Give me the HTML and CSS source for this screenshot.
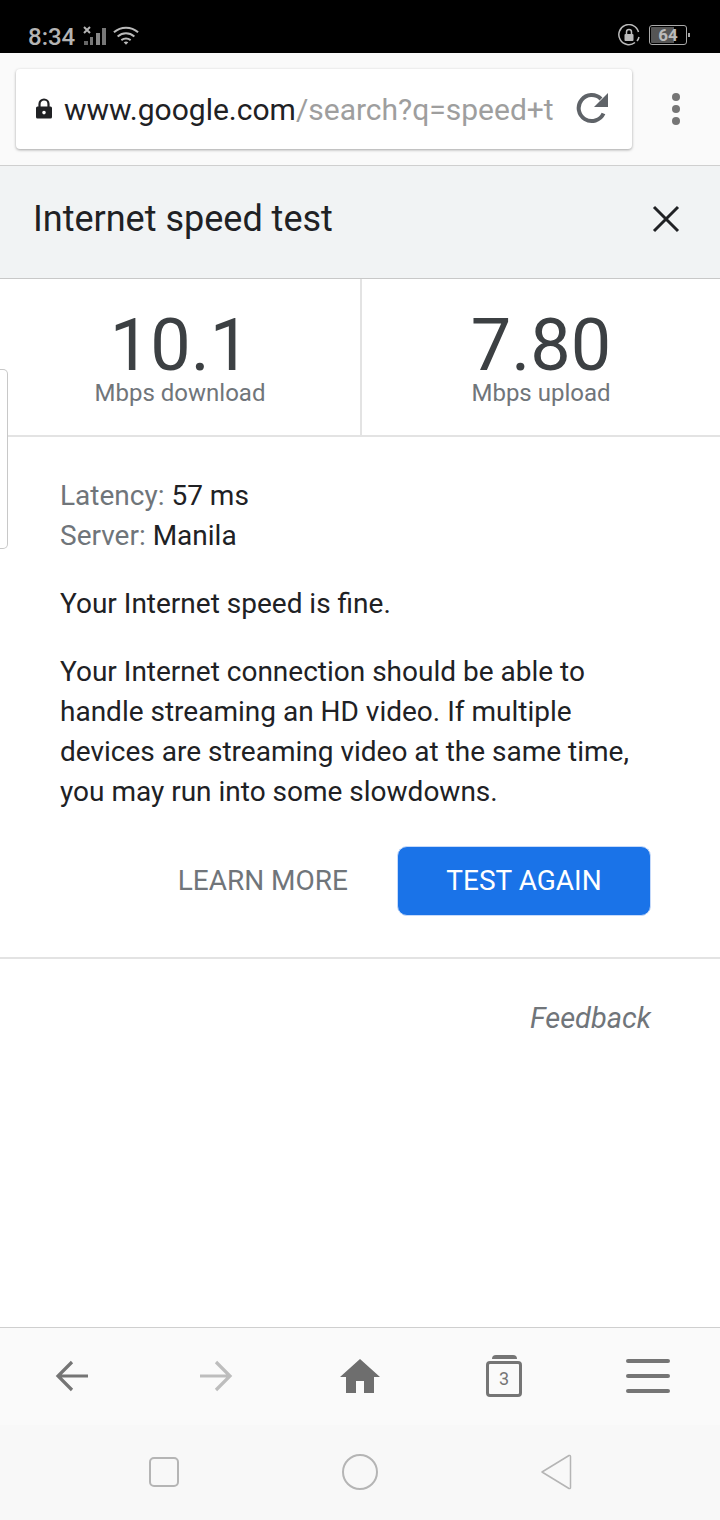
FILE: index.html
```html
<!DOCTYPE html>
<html lang="en">

<head>
    <meta charset="UTF-8">
    <meta name="viewport" content="width=device-width, initial-scale=1.0">
    <title>Internet speed test</title>
    <link rel="stylesheet" href="styles.css">
</head>

<body>
    <!-- Status bar -->
    <div class="status-bar">
        <div class="status-left">
            <span class="clock">8:34</span>
            <svg class="signal" width="24" height="20" viewBox="0 0 24 20">
                <path d="M1 1l6 6M7 1L1 7" stroke="#b4b4b4" stroke-width="2" fill="none"/>
                <rect x="1" y="15" width="4" height="4" fill="#666"/>
                <rect x="7" y="11" width="3" height="8" fill="#777"/>
                <rect x="13" y="7" width="4" height="12" fill="#888"/>
                <rect x="19" y="2" width="4" height="17" fill="#777"/>
            </svg>
            <svg class="wifi" width="26" height="19" viewBox="0 0 28 20">
                <path d="M1 6.500C8.500 0 19.500 0 27 6.500M5 11c5.500-4.500 12.500-4.500 18 0M9 15c3-2.200 7-2.200 10 0" stroke="#bbb" stroke-width="2.200" fill="none"/>
                <path d="M11.500 17.200c1.500-1 3.500-1 5 0L14 20z" fill="#bbb"/>
            </svg>
        </div>
        <div class="status-right">
            <svg width="22" height="22" viewBox="0 0 22 22">
                <path d="M17 18.500A10 10 0 1 1 20.500 8" stroke="#bbb" stroke-width="1.500" fill="none"/>
                <path d="M21 13a10 10 0 0 1-2 4" stroke="#bbb" stroke-width="1.500" fill="none"/>
                <rect x="6.500" y="10" width="9" height="7" rx="1" fill="#bbb"/>
                <path d="M8.500 10V8a2.500 2.500 0 0 1 5 0v2" stroke="#bbb" stroke-width="1.500" fill="none"/>
            </svg>
            <div class="battery"><span class="battery-num">64</span></div>
            <span class="battery-tip"></span>
        </div>
    </div>

    <!-- Address bar -->
    <div class="toolbar">
        <div class="url-box">
            <svg class="lock" width="18" height="22" viewBox="0 0 18 22">
                <path d="M4.500 9V6a4.500 4.500 0 0 1 9 0v3" stroke="#202124" stroke-width="2.200" fill="none"/>
                <path fill-rule="evenodd" d="M2.500 8.500h13a1.500 1.500 0 0 1 1.500 1.500v9a1.500 1.500 0 0 1-1.500 1.500h-13A1.500 1.500 0 0 1 1 19v-9a1.500 1.500 0 0 1 1.500-1.500zM9 12.800a1.800 1.800 0 1 0 0 3.600 1.800 1.800 0 0 0 0-3.600z" fill="#202124"/>
            </svg>
            <div class="url"><span class="url-host">www.google.com</span><span class="url-path">/search?q=speed+t</span></div>
            <svg class="reload" width="34" height="34" viewBox="0 0 34 34">
                <path d="M27.500 21.500A13 13 0 1 1 25 7" stroke="#5f6368" stroke-width="4" fill="none"/>
                <path d="M32 1v14H18z" fill="#5f6368"/>
            </svg>
        </div>
        <div class="more">
            <span class="dot"></span>
            <span class="dot"></span>
            <span class="dot"></span>
        </div>
    </div>

    <div class="page">
        <div class="title-bar">
            <span class="title">Internet speed test</span>
            <svg width="30" height="30" viewBox="0 0 30 30">
                <path d="M3 3l24 24M27 3L3 27" stroke="#202124" stroke-width="3" fill="none"/>
            </svg>
        </div>

        <div class="speeds">
            <div class="speed speed-down">
                <div class="speed-num">10.1</div>
                <div class="speed-label">Mbps download</div>
            </div>
            <div class="speed">
                <div class="speed-num">7.80</div>
                <div class="speed-label">Mbps upload</div>
            </div>
        </div>

        <div class="results">
            <div class="stats">
                <div><span class="stat-key">Latency:</span> 57 ms</div>
                <div><span class="stat-key">Server:</span> Manila</div>
            </div>
            <p>Your Internet speed is fine.</p>
            <p>Your Internet connection should be able to handle streaming an HD video. If multiple devices are streaming video at the same time, you may run into some slowdowns.</p>
            <div class="actions">
                <span class="learn">LEARN MORE</span>
                <span class="test-btn">TEST AGAIN</span>
            </div>
        </div>

        <div class="feedback">Feedback</div>

        <!-- Edge handle lying over the page -->
        <div class="edge-handle"></div>
    </div>

    <!-- Browser bottom bar -->
    <div class="bottom-bar">
        <svg width="34" height="34" viewBox="0 0 34 34">
            <path d="M33 17H3M17 3L3 17l14 14" stroke="#757575" stroke-width="3.200" fill="none"/>
        </svg>
        <svg width="34" height="34" viewBox="0 0 34 34">
            <path d="M1 17h30M17 3l14 14-14 14" stroke="#bdbdbd" stroke-width="3.200" fill="none"/>
        </svg>
        <svg width="40" height="36" viewBox="0 0 40 36">
            <path d="M20 1L0 19h6v16h10V23h8v12h10V19h6z" fill="#6e6e6e"/>
        </svg>
        <div class="tabs">
            <span class="tabs-top"></span>
            <span class="tabs-box">3</span>
        </div>
        <div class="menu">
            <span class="menu-line"></span>
            <span class="menu-line"></span>
            <span class="menu-line"></span>
        </div>
    </div>

    <!-- Android nav bar -->
    <div class="nav-bar">
        <span class="nav-square"></span>
        <span class="nav-circle"></span>
        <svg width="32" height="36" viewBox="0 0 32 36">
            <path d="M2 18L29 1.500q1.500-.5 1.500 1v31q0 1.500-1.500 1z" stroke="#b5b5b5" stroke-width="1.500" fill="none" stroke-linejoin="round"/>
        </svg>
    </div>
</body>

</html>
```

FILE: styles.css
```css
* {
    box-sizing: border-box;
}

body {
    margin: 0;
    width: 720px;
    height: 1520px;
    overflow: hidden;
    display: flex;
    flex-direction: column;
    font-family: Roboto, sans-serif;
    background: #fff;
    color: #202124;
}

.status-bar {
    height: 53px;
    background: #000;
    display: flex;
    justify-content: space-between;
    align-items: flex-end;
    padding: 0 30px 5px 28px;
    color: #b4b4b4;
}

.status-left {
    display: flex;
    align-items: flex-start;
    gap: 9px;
    height: 26px;
}

.clock {
    font-size: 24px;
    line-height: 28px;
    font-weight: 500;
    margin-top: 1px;
}

.signal {
    margin-left: -1px;
    margin-top: 4px;
}

.wifi {
    margin-left: -3px;
    margin-top: 4px;
}

.status-right {
    display: flex;
    align-items: center;
    gap: 9px;
    height: 30px;
    margin-bottom: -2px;
}

.battery {
    width: 38px;
    height: 20px;
    border: 1px solid #aaa;
    border-radius: 3px;
    padding: 1px;
    background: linear-gradient(to right, #555 68%, #000 68%);
    background-clip: content-box;
    display: flex;
    align-items: center;
    justify-content: center;
}

.battery-num {
    font-size: 17px;
    font-weight: 700;
    color: #bbb;
}

.battery-tip {
    width: 2px;
    height: 4px;
    background: #aaa;
    margin-left: -8px;
}

.toolbar {
    height: 113px;
    background: #fafafa;
    border-bottom: 1px solid #cfcfcf;
    display: flex;
    align-items: flex-start;
    padding: 16px 0 0 16px;
}

.url-box {
    width: 616px;
    height: 80px;
    background: #fff;
    border-radius: 4px;
    box-shadow: 0 1px 3px rgba(0, 0, 0, 0.35);
    display: flex;
    align-items: center;
    padding: 0 22px 0 19px;
}

.lock {
    flex: none;
}

.url {
    flex: 1;
    margin: 0 22px 0 11px;
    white-space: nowrap;
    font-size: 30px;
}

.url-path {
    color: #9e9e9e;
}

.reload {
    flex: none;
}

.more {
    display: flex;
    flex-direction: column;
    gap: 4px;
    margin: 24px 0 0 40px;
}

.dot {
    width: 8px;
    height: 8px;
    border-radius: 50%;
    background: #757575;
}

.page {
    position: relative;
    flex: 1;
}

.title-bar {
    height: 113px;
    background: #f1f3f4;
    border-bottom: 1px solid #c8c8c8;
    display: flex;
    align-items: center;
    justify-content: space-between;
    padding: 0 39px 7px 33px;
}

.title {
    font-size: 36px;
}

.speeds {
    display: flex;
    height: 158px;
    border-bottom: 2px solid #e3e3e3;
}

.speed {
    flex: 1;
    text-align: center;
    padding-top: 32px;
}

.speed-down {
    flex: none;
    width: 362px;
    border-right: 2px solid #e3e3e3;
}

.speed-num {
    font-size: 72px;
    line-height: 69px;
    color: #3c4043;
}

.speed-label {
    font-size: 24px;
    line-height: 26px;
    color: #70757a;
}

.results {
    padding: 39px 69px 41px 60px;
    border-bottom: 2px solid #e3e3e3;
    font-size: 28px;
    line-height: 40px;
}

.stat-key {
    color: #70757a;
}

.results p {
    margin: 28px 0 0;
}

.actions {
    display: flex;
    justify-content: flex-end;
    align-items: center;
    gap: 49px;
    margin-top: 34px;
}

.learn {
    color: #70757a;
}

.test-btn {
    width: 254px;
    height: 70px;
    display: flex;
    align-items: center;
    justify-content: center;
    background: #1a73e8;
    border: 1px solid #c6dafa;
    border-radius: 10px;
    color: #fff;
}

.feedback {
    text-align: right;
    padding: 39px 69px 0 0;
    font-size: 29px;
    line-height: 40px;
    font-style: italic;
    color: #70757a;
}

.edge-handle {
    position: absolute;
    left: 0;
    top: 203px;
    width: 8px;
    height: 180px;
    background: #fff;
    border: 1px solid #c8c8c8;
    border-left: 0;
    border-radius: 0 5px 5px 0;
}

.bottom-bar {
    height: 98px;
    background: #fafafa;
    border-top: 1px solid #cfcfcf;
    display: grid;
    grid-template-columns: repeat(5, 144px);
    justify-items: center;
    align-items: center;
    padding-bottom: 2px;
}

.tabs {
    display: flex;
    flex-direction: column;
    align-items: center;
    gap: 2px;
}

.tabs-top {
    width: 25px;
    height: 4px;
    background: #757575;
    border-radius: 4px 4px 0 0;
}

.tabs-box {
    width: 36px;
    height: 36px;
    border: 3px solid #757575;
    border-radius: 4px;
    display: flex;
    align-items: center;
    justify-content: center;
    font-size: 18px;
    color: #757575;
}

.menu {
    display: flex;
    flex-direction: column;
    gap: 11px;
}

.menu-line {
    width: 44px;
    height: 4px;
    border-radius: 2px;
    background: #757575;
}

.nav-bar {
    height: 95px;
    background: #f8f8f8;
    display: grid;
    grid-template-columns: repeat(3, 196px);
    justify-content: center;
    justify-items: center;
    align-items: center;
    padding-bottom: 2px;
}

.nav-square {
    width: 30px;
    height: 30px;
    border: 2px solid #b5b5b5;
    border-radius: 5px;
}

.nav-circle {
    width: 36px;
    height: 36px;
    border: 2px solid #b5b5b5;
    border-radius: 50%;
}
```
